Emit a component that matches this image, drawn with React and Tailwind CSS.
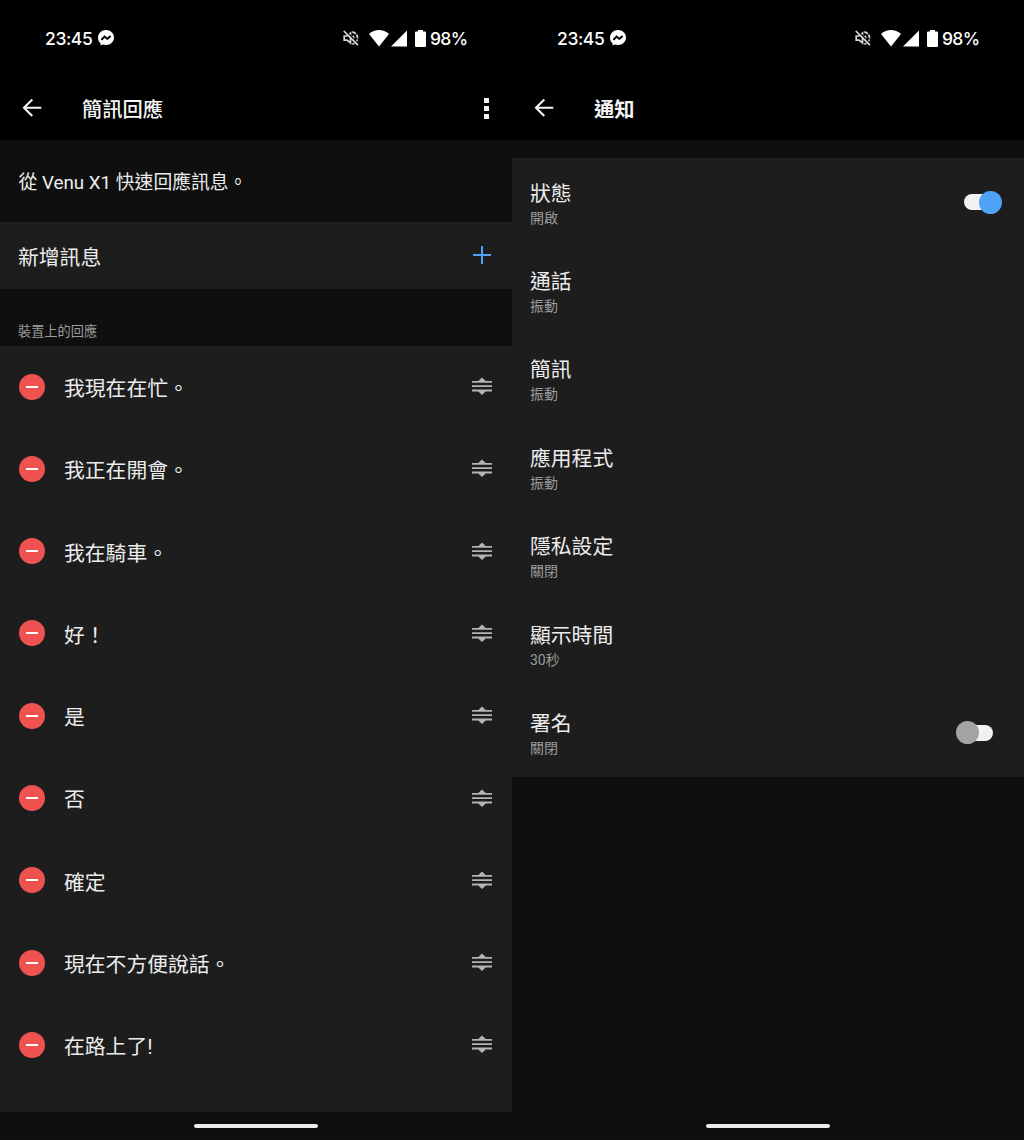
import React, { useState } from 'react';

const responses = [
    "我現在在忙。",
    "我正在開會。",
    "我在騎車。",
    "好！",
    "是",
    "否",
    "確定",
    "現在不方便說話。",
    "在路上了!",
];

const settings = [
    { title: "狀態", value: "開啟", toggle: true },
    { title: "通話", value: "振動" },
    { title: "簡訊", value: "振動" },
    { title: "應用程式", value: "振動" },
    { title: "隱私設定", value: "關閉" },
    { title: "顯示時間", value: "30秒" },
    { title: "署名", value: "關閉", toggle: true },
];

const StatusBar = () => (
    <div className="flex h-[76px] items-center justify-between pl-[45px] pr-[46px] font-[Inter,sans-serif] text-[17.500px] font-medium text-white">
        <div className="flex items-center gap-[6px]">
            <span className="w-[47px] whitespace-nowrap pt-[2px] tracking-[-0.4px]">23:45</span>
            <svg className="h-4 w-4" viewBox="0 0 16 16">
                <path d="M8 0C3.500 0 0 3.300 0 7.700c0 2.300 1 4.300 2.600 5.700v2.200l2.300-1c1 .3 2 .5 3.100.5 4.500 0 8-3.200 8-7.500S12.500 0 8 0z" fill="#fff" />
                <path d="M3.400 9.900 6.500 6.600l2.900 2.200 3.200-2.900" fill="none" stroke="#000" strokeWidth="2" />
            </svg>
        </div>
        <div className="flex items-center">
            <svg className="mr-[10px] h-4 w-4" viewBox="0 0 16 16" fill="none" stroke="#d8d8d8" strokeWidth="1.700">
                <path d="M1.200 6H4L7.500 3v10L4 10.200H1.200z" />
                <path d="M9.600 5.800c1.600 1 1.600 3.600 0 4.600" />
                <path d="M9.300 1.900c7 1.500 7 10.700 0 12.200" strokeDasharray="4 1" />
                <path d="M2.200.4 15.800 14" stroke="#000" strokeWidth="1.300" />
                <path d="M.8 1 15 15.200" />
            </svg>
            <svg className="mr-[2px] h-[17px] w-5" viewBox="0 0 20 17">
                <path d="M0 4C5.800-1.200 14.200-1.200 20 4L10 16.500z" fill="#fff" />
            </svg>
            <svg className="mr-[8px] h-[17px] w-4" viewBox="0 0 16 17">
                <path d="M16 .5v16H0z" fill="#fff" />
            </svg>
            <svg className="mr-[4px] h-[17px] w-[11px]" viewBox="0 0 11 17">
                <path d="M3 0h5v1.500h2q1 0 1 1V16q0 1-1 1H1q-1 0-1-1V2.500q0-1 1-1h2z" fill="#fff" />
            </svg>
            <span className="w-[36px] whitespace-nowrap pt-[2px] tracking-[-0.7px]">98%</span>
        </div>
    </div>
);

const Header = ({ title, menu, bold }) => (
    <header className="flex h-16 items-center bg-black pl-[22px] pr-[23px] text-[#f5f5f5]">
        <svg className="h-5 w-5" viewBox="0 0 20 20" fill="none" stroke="#f2f2f2" strokeWidth="2.100">
            <path d="M19.300 9.800H2.200M10.300 1.600 2 9.800l8.300 8.200" />
        </svg>
        <h1 className={`ml-10 mt-[4px] flex-1 text-[20.300px] ${bold ? "font-bold" : "font-medium"}`}>{title}</h1>
        {menu && (
            <button className="flex flex-col gap-[3px]" aria-label="menu">
                <span className="h-[5px] w-[5px] bg-[#f5f5f5]" />
                <span className="h-[5px] w-[5px] bg-[#f5f5f5]" />
                <span className="h-[5px] w-[5px] bg-[#f5f5f5]" />
            </button>
        )}
    </header>
);

const DragHandle = () => (
    <svg className="-mt-[2px] h-5 w-5" viewBox="0 0 20 20" fill="#b4b4b4">
        <path d="M0 5h20v1.800H0zM0 9.300h20v1.800H0zM0 13.600h20v1.800H0zM6.300 5 10 1.400 13.700 5zM6.300 15.400l3.700 3.600 3.700-3.600z" />
    </svg>
);

const Toggle = ({ on, onClick }) => (
    <button
        className={`relative h-[23px] w-[38px] ${on ? "" : "mr-2"}`}
        onClick={onClick}
        role="switch"
        aria-checked={on}
    >
        <span className={`absolute top-[3.500px] h-4 w-[26px] rounded-full bg-[#f2f2f2] ${on ? "left-0" : "right-px"}`} />
        <span className={`absolute top-0 h-[23px] w-[23px] rounded-full ${on ? "right-0 bg-[#4fa3f7]" : "left-0 bg-[#a3a3a3]"}`} />
    </button>
);

const HomeBar = () => (
    <div className="flex h-7 items-center justify-center bg-[#0f0f0f]">
        <span className="h-1 w-[124px] rounded-full bg-[#ececec]" />
    </div>
);

const Replies = () => (
    <section className="flex h-full w-[512px] flex-col bg-[#0f0f0f]">
        <div className="bg-black"><StatusBar /></div>
        <Header title="簡訊回應" menu />
        <p className="flex h-[82px] items-center pl-[18.500px] pt-[4px] text-[18.800px]">從 Venu X1 快速回應訊息。</p>
        <div className="flex h-[67px] items-center justify-between bg-[#1d1d1d] pl-[18px] pr-[21px]">
            <span className="pt-[6px] text-[20.800px]">新增訊息</span>
            <svg className="-mt-px h-[18px] w-[18px]" viewBox="0 0 18 18" stroke="#4fa3f7" strokeWidth="2">
                <path d="M9 0v18M0 9h18" />
            </svg>
        </div>
        <h2 className="flex h-[57px] items-end pb-[4px] pl-[18px] text-[13.200px] text-[#9b9b9b]">裝置上的回應</h2>
        <ul className="flex-1 bg-[#1d1d1d]">
            {responses.map((text) => (
                <li key={text} className="flex h-[82.290px] items-center pl-[19px] pr-5">
                    <span className="-mt-px flex h-[26px] w-[26px] items-center justify-center rounded-full bg-[#f05252]">
                        <span className="h-[2px] w-3 bg-white" />
                    </span>
                    <span className="ml-[19px] flex-1 pt-[5px] text-[20.800px]">{text}</span>
                    <DragHandle />
                </li>
            ))}
        </ul>
        <HomeBar />
    </section>
);

const Notifications = () => {
    const [enabled, setEnabled] = useState({ 狀態: true, 署名: false });

    return (
        <section className="flex h-full w-[512px] flex-col bg-[#0f0f0f]">
            <div className="bg-black"><StatusBar /></div>
            <Header title="通知" bold />
            <ul className="mt-[18px] bg-[#1d1d1d]">
                {settings.map(({ title, value, toggle }) => (
                    <li key={title} className="flex h-[88.400px] items-center justify-between pl-[18px] pr-[22px]">
                        <div className="pt-[4px]">
                            <div className="text-[20.800px] leading-[28px]">{title}</div>
                            <div className="text-[14px] leading-[21px] text-[#9b9b9b]">{value}</div>
                        </div>
                        {toggle && (
                            <Toggle
                                on={enabled[title]}
                                onClick={() => setEnabled({ ...enabled, [title]: !enabled[title] })}
                            />
                        )}
                    </li>
                ))}
            </ul>
            <div className="flex-1" />
            <HomeBar />
        </section>
    );
};

const App = () => (
    <main lang="zh-Hant" className="flex h-[1140px] w-[1024px] overflow-hidden font-[Roboto,'Noto_Sans_CJK_TC',sans-serif] text-[#ececec]">
        <Replies />
        <Notifications />
    </main>
);

export default App;
